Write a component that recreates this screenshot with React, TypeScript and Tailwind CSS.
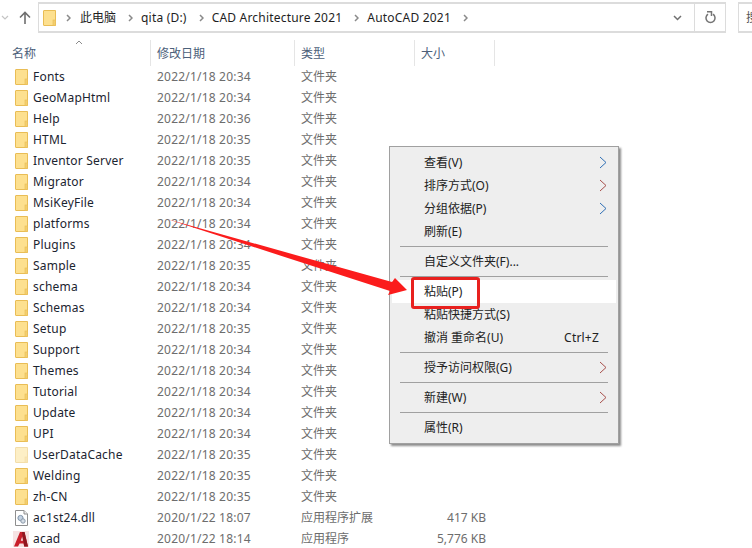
const FONT = '"Noto Sans", "Noto Sans CJK SC", sans-serif';

type FileRow = {
  name: string;
  date: string;
  type: string;
  size?: string;
  icon: "folder" | "faded" | "dll" | "acad";
};

const folders: [string, string][] = [
  ["Fonts", "20:34"],
  ["GeoMapHtml", "20:34"],
  ["Help", "20:36"],
  ["HTML", "20:35"],
  ["Inventor Server", "20:35"],
  ["Migrator", "20:34"],
  ["MsiKeyFile", "20:34"],
  ["platforms", "20:34"],
  ["Plugins", "20:34"],
  ["Sample", "20:35"],
  ["schema", "20:34"],
  ["Schemas", "20:34"],
  ["Setup", "20:35"],
  ["Support", "20:34"],
  ["Themes", "20:34"],
  ["Tutorial", "20:34"],
  ["Update", "20:34"],
  ["UPI", "20:34"],
  ["UserDataCache", "20:35"],
  ["Welding", "20:35"],
  ["zh-CN", "20:35"],
];

const rows: FileRow[] = [
  ...folders.map(([name, time]): FileRow => ({
    name,
    date: `2022/1/18 ${time}`,
    type: "文件夹",
    icon: name === "UserDataCache" ? "faded" : "folder",
  })),
  { name: "ac1st24.dll", date: "2020/1/22 18:07", type: "应用程序扩展", size: "417 KB", icon: "dll" },
  { name: "acad", date: "2020/1/22 18:14", type: "应用程序", size: "5,776 KB", icon: "acad" },
];

function FolderIcon({ faded }: { faded?: boolean }) {
  return (
    <svg width="13" height="16" viewBox="0 0 13 16" className={faded ? "opacity-50" : ""}>
      <path d="M1 .5H12.5V15.5H1A.5.5 0 0 1 .5 15V1A.5.5 0 0 1 1 .5Z" fill="#fde08f" stroke="#e9bd55" />
      <rect x="10" y="10" width="2.5" height="5.5" fill="#f3cf6f" stroke="#e9bd55" strokeWidth="0.6" />
    </svg>
  );
}

function DllIcon() {
  return (
    <svg width="13" height="16" viewBox="0 0 13 16">
      <path d="M.5.5H9L12.5 4V15.5H.5Z" fill="#fff" stroke="#8e8e8e" />
      <path d="M9 .5V4H12.5" fill="#eee" stroke="#8e8e8e" />
      <circle cx="5.5" cy="8" r="2.6" fill="#c3d2e2" stroke="#7f93a8" />
      <circle cx="8" cy="11" r="2.2" fill="#d5dde6" stroke="#8a98a8" />
    </svg>
  );
}

function AcadIcon() {
  return (
    <svg width="16" height="16" viewBox="0 0 16 16">
      <rect width="16" height="16" fill="#f6e3e3" />
      <path d="M1 15.5 7 1H11.5L15 15.5H11.2L10.6 12.4H6.6L5 15.5ZM7.8 9.8H10L9.2 5.4Z" fill="#c8202c" />
      <path d="M9 1H11.5L15 15.5H11.2Z" fill="#8e1820" />
    </svg>
  );
}

function RowIcon({ icon }: { icon: FileRow["icon"] }) {
  if (icon === "dll") return <DllIcon />;
  if (icon === "acad") return <AcadIcon />;
  return <FolderIcon faded={icon === "faded"} />;
}

function Crumb() {
  return (
    <svg width="5" height="8" viewBox="0 0 5 8" className="block shrink-0">
      <path d="M1 1 4 4 1 7" fill="none" stroke="#8a8a8a" strokeWidth="1.5" />
    </svg>
  );
}

function MenuArrow({ color }: { color: string }) {
  return (
    <svg width="8" height="13" viewBox="0 0 8 13">
      <path d="M1 1 7 6.5 1 12" fill="none" stroke={color} strokeWidth="1" />
    </svg>
  );
}

function MenuItem({ label, arrow, hint, active }: { label: string; arrow?: string; hint?: string; active?: boolean }) {
  return (
    <div className={`h-[23px] flex items-center justify-between pl-[32px] pr-[9px] ${active ? "bg-white" : ""}`}>
      <span>{label}</span>
      {arrow ? <MenuArrow color={arrow} /> : null}
      {hint ? <span className="pr-[8px] tracking-[0.2px]">{hint}</span> : null}
    </div>
  );
}

function MenuSeparator() {
  return <div className="h-[7px] mx-[8px] flex items-center"><div className="h-px w-full bg-[#a0a0a0]" /></div>;
}

export default function App() {
  return (
    <div className="relative w-[752px] h-[548px] overflow-hidden bg-white text-[12px]" style={{ fontFamily: FONT }}>
      {/* toolbar */}
      <div className="h-[40px] flex items-start pt-[2px]">
        <div className="w-[38px] flex items-center h-[31px] shrink-0">
          <svg width="8" height="5" viewBox="0 0 8 5" className="ml-[1px]">
            <path d="M1 1 4 4 7 1" fill="none" stroke="#c4c4c4" strokeWidth="1.2" />
          </svg>
          <svg width="12" height="13" viewBox="0 0 12 13" className="ml-[10px]">
            <path d="M6 13V1.5M1 6.5 6 1.5 11 6.5" fill="none" stroke="#6f6f6f" strokeWidth="1.6" />
          </svg>
        </div>
        <div className="w-[688px] h-[31px] border-2 border-[#dcdcdc] border-x-[1.5px] flex items-center shrink-0">
          <div className="flex-1 flex items-center pl-[4px] text-[#1e1e1e] tracking-[0.2px]">
            <FolderIcon />
            <span className="ml-[10px]"><Crumb /></span>
            <span className="ml-[9px] tracking-normal">此电脑</span>
            <span className="ml-[12px]"><Crumb /></span>
            <span className="ml-[8px]">qita (D:)</span>
            <span className="ml-[12px]"><Crumb /></span>
            <span className="ml-[8px]">CAD Architecture 2021</span>
            <span className="ml-[12px]"><Crumb /></span>
            <span className="ml-[8px]">AutoCAD 2021</span>
            <span className="ml-[12px]"><Crumb /></span>
          </div>
          <svg width="9" height="6" viewBox="0 0 9 6" className="mr-[12px]">
            <path d="M1 1 4.5 4.5 8 1" fill="none" stroke="#707070" strokeWidth="1.5" />
          </svg>
          <div className="w-[31px] h-full border-l border-[#dcdcdc] flex items-center justify-center">
            <svg width="11" height="13" viewBox="0 0 11 13">
              <path d="M3 3.2A4.5 4.5 0 1 0 8 3.2" fill="none" stroke="#757575" strokeWidth="1.5" />
              <path d="M2 .8H6.5V5" fill="none" stroke="#757575" strokeWidth="1.5" />
            </svg>
          </div>
        </div>
        <div className="ml-[12px] flex-1 h-[31px] border-2 border-r-0 border-[#dcdcdc] border-l-[1.5px] pl-[7px] flex items-center text-[#555] overflow-hidden">搜</div>
      </div>

      {/* column headers */}
      <div className="relative h-[26px] flex items-center text-[#4c607a]">
        <div className="w-[151px] h-full pl-[12px] pt-[2px] flex items-center border-r border-[#e5e5e5]">名称</div>
        <div className="w-[144px] h-full pl-[6px] pt-[2px] flex items-center border-r border-[#e5e5e5]">修改日期</div>
        <div className="w-[120px] h-full pl-[6px] pt-[2px] flex items-center border-r border-[#e5e5e5]">类型</div>
        <div className="w-[80px] h-full pl-[6px] pt-[2px] flex items-center border-r border-[#e5e5e5]">大小</div>
        <svg width="8" height="5" viewBox="0 0 8 5" className="absolute left-[75px] top-0">
          <path d="M1 4 4 1 7 4" fill="none" stroke="#8b8b8b" />
        </svg>
      </div>

      {/* file rows */}
      <div className="flex flex-col">
        {rows.map((row) => (
          <div key={row.name} className="h-[21px] flex items-center shrink-0">
            <div className="w-[33px] pl-[15px] flex items-center shrink-0">
              <span className={row.icon === "acad" ? "-ml-[2px]" : ""}><RowIcon icon={row.icon} /></span>
            </div>
            <div className="w-[124px] text-[#1b2430] shrink-0 whitespace-nowrap tracking-[0.2px]">{row.name}</div>
            <div className="w-[144px] text-[#6d6d6d] shrink-0 tracking-[0.2px]">{row.date}</div>
            <div className="w-[100px] text-[#6d6d6d] shrink-0 whitespace-nowrap">{row.type}</div>
            <div className="w-[85px] text-[#6d6d6d] text-right shrink-0">{row.size}</div>
          </div>
        ))}
      </div>

      {/* context menu */}
      <div className="absolute left-[389px] top-[146px] w-[230px] h-[298px] bg-[#eeeeee] border border-[#a0a0a0] pt-[4px] pb-[3px] pl-[2px] pr-[2px] text-[#222] shadow-[2px_2px_2px_rgba(0,0,0,0.45)]">
        <MenuItem label="查看(V)" arrow="#2f6fb5" />
        <MenuItem label="排序方式(O)" arrow="#a8504c" />
        <MenuItem label="分组依据(P)" arrow="#2f6fb5" />
        <MenuItem label="刷新(E)" />
        <MenuSeparator />
        <MenuItem label="自定义文件夹(F)..." />
        <MenuSeparator />
        <MenuItem label="粘贴(P)" active />
        <MenuItem label="粘贴快捷方式(S)" />
        <MenuItem label="撤消 重命名(U)" hint="Ctrl+Z" />
        <MenuSeparator />
        <MenuItem label="授予访问权限(G)" arrow="#a8504c" />
        <MenuSeparator />
        <MenuItem label="新建(W)" arrow="#a8504c" />
        <MenuSeparator />
        <MenuItem label="属性(R)" />
      </div>

      {/* annotation */}
      <svg width="752" height="548" viewBox="0 0 752 548" className="absolute left-0 top-0 pointer-events-none">
        <polygon points="167,219 392,282 395,278 407,290 388,295 390,291" fill="#fb1c1c" />
      </svg>
      <div className="absolute left-[411px] top-[277px] w-[69px] h-[32px] border-[3px] border-[#e8211f] rounded-[3px]" />
    </div>
  );
}
